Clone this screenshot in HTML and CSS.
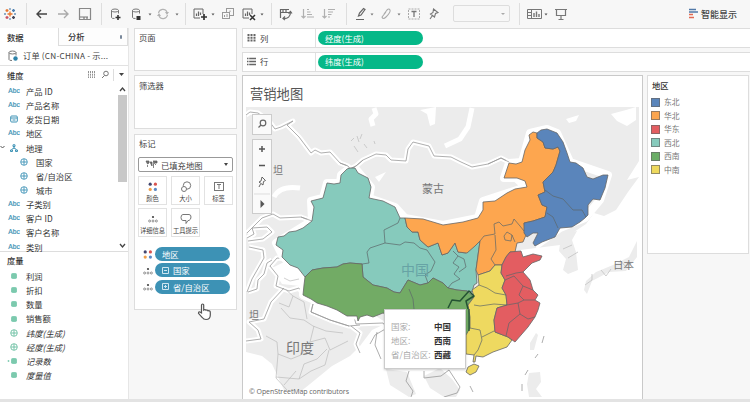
FILE: index.html
```html
<!DOCTYPE html>
<html lang="zh-CN">
<head>
<meta charset="utf-8">
<title>营销地图</title>
<link rel="stylesheet" href="styles.css">
</head>
<body>
<svg width="0" height="0" class="defs">
  <defs>
    <g id="dots4"><circle cx="2.200" cy="2.200" r="1.600" fill="#43466f"/><circle cx="7.400" cy="2.200" r="1.600" fill="#d9534f"/><circle cx="2.200" cy="7.400" r="1.600" fill="#f0a04b"/><circle cx="7.400" cy="7.400" r="1.600" fill="#5b8ac6"/></g>
    <g id="detail"><circle cx="5" cy="2" r="1.100" fill="#444"/><g fill="none" stroke="#777" stroke-width=".8"><circle cx="1.600" cy="6" r="1"/><circle cx="5" cy="6" r="1"/><circle cx="8.400" cy="6" r="1"/></g></g>
    <g id="globe" fill="none" stroke="currentColor"><circle cx="4" cy="4" r="3.300" stroke-width=".9"/><path d="M4 1V7M1 4H7" stroke-width=".9"/></g>
    <g id="hash"><rect x="1" y="1" width="6" height="6" rx="1.800" fill="#8ad2ba"/><path d="M3 1.500V6.500M5 1.500V6.500M1.500 3H6.500M1.500 5H6.500" stroke="#68bd9f" stroke-width=".5"/></g>
    <g id="db"><path d="M0 2V9Q0 10 3 10M7 2V5M0 2Q0 .5 3.500 .5T7 2Q7 3.500 3.500 3.500T0 2" fill="none" stroke="#777"/></g>
    <g id="chart" fill="none" stroke="#666"><path d="M9 5V0H0V9H6"/><path d="M2.500 7V4.500M4.500 7V2.500M6.500 6V3.500" stroke-width="1.200"/></g>
    <g id="frontiers">
      <path d="M246 115L250 112L258 113L269 121L275 129L281 127L293 121L287 125L299 137L311 153L315 150L321 153L330 152L340 163L348 166L350 169L356 166L363 160L376 154L386 155L391 160L406 161L408 149L413 142L429 146L434 156L451 157L461 162L472 167L488 164L501 158L509 162"/>
      <path d="M247 233L262 218L273 214L280 218L301 217L312 221M247 238L254 234L252 228L267 227L272 232L263 239L248 241M249 247L263 250L264 258L252 279L247 292M248 292L257 289L258 280L264 274L267 263L272 260M270 266L277 258L288 259M270 266L278 276L276 286L289 291L299 288L303 294M284 288L271 302L264 319L249 322L258 330L261 339L246 341"/>
      <path d="M313 304L311 312L330 320L349 326L360 325M354 317L356 324L383 323L387 328L375 335L370 344M351 326L360 333L356 344L360 353M377 332L375 345L381 359M409 371L406 381L413 391L411 397M424 371V378L441 376L449 370L460 387L457 393L444 397"/>
    </g>
  </defs>
</svg>
<div class="app">
  <header class="toolbar">
    <svg width="26" height="27" viewBox="0 0 26 27"><g stroke-width="1.300"><path d="M10 11.500V16.500M7.500 14H12.500" stroke="#e8762d"/><path d="M7 9V12M5.500 10.500H8.500" stroke="#e8762d"/><path d="M13.500 9V12M12 10.500H15" stroke="#4c7fb0"/><path d="M7 16V19M5.500 17.500H8.500" stroke="#c95062"/><path d="M13.500 16V19M12 17.500H15" stroke="#445"/><path d="M10 8V10M10 18V20M4 14H6M14 14H16" stroke="#6b93b8"/></g></svg>
    <i class="sep"></i>
    <svg width="74" height="27" viewBox="27 0 74 27" fill="none" stroke-width="1.400"><path d="M47 14H37M41 10L37 14L41 18" stroke="#444"/><path d="M58 14H68M64 10L68 14L64 18" stroke="#aaa"/><path d="M79.500 8.500H90.500V19.500H79.500Z" stroke="#888" stroke-width="1.200"/><path d="M80 17H84V19M87 17V19M84 17H88" stroke="#777" stroke-width="1.200"/></svg>
    <i class="sep"></i>
    <svg width="83" height="27" viewBox="102 0 83 27"><use href="#db" x="111.500" y="8.500"/><path d="M118 15V20M115.500 17.500H120.500" stroke="#333" stroke-width="1.600"/><use href="#db" x="132.500" y="8.500"/><rect x="136.500" y="16" width="4" height="4" fill="#333"/><path d="M148.500 13.500h3l-1.500 2zM175.500 13.500h3l-1.500 2z" fill="#666"/><g fill="none" stroke="#b3b3b3" stroke-width="1.200"><path d="M158.500 13A4.500 4.500 0 0 1 167 12M167.500 15A4.500 4.500 0 0 1 159 16"/></g><path d="M165 12h4l-2 3zM157 16h4l-2-3z" fill="#b3b3b3"/></svg>
    <i class="sep"></i>
    <svg width="85" height="27" viewBox="186 0 85 27"><use href="#chart" x="194" y="9"/><path d="M204 14V20M201 17H207" stroke="#333" stroke-width="1.700"/><path d="M211.500 13.500h3l-1.500 2zM260.500 13.500h3l-1.500 2z" fill="#555"/><g fill="#f7f7f7" stroke="#999"><rect x="226.500" y="8.500" width="7" height="7"/><rect x="222.500" y="12.500" width="7" height="6"/></g><path d="M224.500 17V15M227 17V14M230 12V10.500" stroke="#999"/><use href="#chart" x="243" y="9"/><path d="M250 15L255 20M255 15L250 20" stroke="#333" stroke-width="1.500"/></svg>
    <i class="sep"></i>
    <svg width="74" height="27" viewBox="272 0 74 27" fill="none"><g stroke="#666" stroke-width="1.200"><path d="M280 9.500H289M280 12.500H289M280.500 9V18M283 9V13M286 9V12M283 18.500Q290.500 19 290.500 12M288.500 13.500L290.500 11.500L292 13.500M285 16.500L283 18.500L285 20"/></g><g stroke="#b0b0b0" stroke-width="1.200"><path d="M303.500 9V18M301.500 16L303.500 18L305.500 16M307 9.500H309M307 12H310.500M307 14.500H312M307 17H314M324.500 9V18M322.500 16L324.500 18L326.500 16M328 9.500H335M328 12H333M328 14.500H331.500M328 17H330"/></g></svg>
    <i class="sep"></i>
    <svg width="103" height="27" viewBox="347 0 103 27" fill="none"><path d="M358.500 16L359.500 13L363.500 8.500L365 9.500L361 15ZM356 19.500H364" stroke="#666" stroke-width="1.200"/><path d="M370.500 13.500h3l-1.500 2zM397.500 13.500h3l-1.500 2z" fill="#777"/><path d="M384 14L387 10Q389 8 390 10T386 17Q383 20 382 17L386 12" stroke="#aaa" stroke-width="1.100"/><rect x="408.500" y="9" width="11" height="10" stroke="#aaa" stroke-dasharray="2 1"/><path d="M411.500 11.500H416.500M414 11.500V17" stroke="#777" stroke-width="1.300"/><path d="M433.500 9L438 12.500L435.500 13.500L434.500 17L430.500 14L433 12.500ZM432.500 15.500L430 19" stroke="#777" stroke-width="1.100"/></svg>
    <div class="fit"><i></i></div>
    <i class="sep sep-fit"></i>
    <svg width="60" height="27" viewBox="521 0 60 27" fill="none" stroke="#777"><path d="M528.500 9.500H542.500V18.500H528.500ZM532.500 9V19M529 12.500H532M529 15.500H532"/><path d="M535 17V13M537.500 17V11.500M540 17V14" stroke-width="1.400"/><path d="M545.500 13.500h3l-1.500 2z" fill="#555" stroke="none"/><path d="M556 9.500H568M557.500 10V15.500H566.500V10M562 16V19M559.500 19.500H564.500" stroke-width="1.200"/></svg>
    <div class="smart"><svg width="10" height="12"><path d="M1 1.500H8M1 4H10" stroke="#5179a8" stroke-width="1.600"/><path d="M1 6.500H5M1 9.500H6" stroke="#e26a52" stroke-width="1.500"/></svg><span>智能显示</span></div>
  </header>

  <main class="work">
    <aside class="data">
      <div class="tabs"><b>数据</b><div class="tab"><b>分析</b><i></i></div></div>
      <div class="source"><svg width="12" height="12"><use href="#db" x="1" y=".5"/><circle cx="7.500" cy="8.500" r="2.200" fill="#2d82a8"/></svg><span>订单 (CN-CHINA - 示...</span></div>
      <div class="dims">
        <div class="head"><b>维度</b><svg width="40" height="12" fill="none" stroke="#777"><path d="M3.500 2V9M5.500 2V9M7.500 2V9M9.500 2V9" stroke-width=".8" stroke-dasharray="2 .7"/><circle cx="21" cy="4.500" r="2.300"/><path d="M19.500 6.500L17 9"/><path d="M28.500 0V12" stroke="#ddd"/><path d="M34 4h5l-2.500 3z" fill="#444" stroke="none"/></svg></div>
        <div class="dimbody">
          <ul class="fields">
            <li><em>Abc</em>产品 ID</li>
            <li><em>Abc</em>产品名称</li>
            <li><em><svg width="8" height="8" fill="none" stroke="#3d92b5"><rect x=".7" y="1" width="6.600" height="6" rx="1"/><path d="M1 3H7M2.500 5H5.500"/></svg></em>发货日期</li>
            <li><em>Abc</em>地区</li>
            <li class="parent"><svg width="5" height="5" class="chev"><path d="M.5 1L2.500 3L4.500 1" fill="none" stroke="#555"/></svg><em><svg width="8" height="8" fill="none" stroke="#3d92b5"><path d="M3 .8H5V2.500H3ZM4 3V4.500M1.500 5.500L4 4L6.500 5.500M.5 6H2.500V7.500H.5ZM5.500 6H7.500V7.500H5.500Z"/></svg></em>地理</li>
            <li class="sub"><em><svg width="8" height="8"><use href="#globe"/></svg></em>国家</li>
            <li class="sub"><em><svg width="8" height="8"><use href="#globe"/></svg></em>省/自治区</li>
            <li class="sub"><em><svg width="8" height="8"><use href="#globe"/></svg></em>城市</li>
            <li><em>Abc</em>子类别</li>
            <li><em>Abc</em>客户 ID</li>
            <li><em>Abc</em>客户名称</li>
            <li><em>Abc</em>类别</li>
          </ul>
          <div class="scroll"><svg width="9" height="11"><path d="M2 7L4.500 4L7 7" fill="none" stroke="#444" stroke-width="1.300"/></svg><i></i><svg width="9" height="11"><path d="M2 4L4.500 7L7 4" fill="none" stroke="#444" stroke-width="1.300"/></svg></div>
        </div>
      </div>
      <div class="measures">
        <div class="head"><b>度量</b></div>
        <ul class="fields green">
          <li><em><svg width="8" height="8"><use href="#hash"/></svg></em>利润</li>
          <li><em><svg width="8" height="8"><use href="#hash"/></svg></em>折扣</li>
          <li><em><svg width="8" height="8"><use href="#hash"/></svg></em>数量</li>
          <li><em><svg width="8" height="8"><use href="#hash"/></svg></em>销售额</li>
          <li class="it"><em><svg width="8" height="8"><use href="#globe"/></svg></em>纬度(生成)</li>
          <li class="it"><em><svg width="8" height="8"><use href="#globe"/></svg></em>经度(生成)</li>
          <li class="it"><em><svg width="14" height="8"><circle cx="1.500" cy="4" r=".9" fill="#7fccb2"/><use href="#hash" x="3"/></svg></em>记录数</li>
          <li class="it"><em><svg width="8" height="8"><use href="#hash"/></svg></em>度量值</li>
        </ul>
      </div>
    </aside>

    <section class="cards">
      <div class="card pages">页面</div>
      <div class="card filters">筛选器</div>
      <div class="card marks">
        <div>标记</div>
        <div class="type"><svg width="13" height="9"><path d="M1 1H4V3L2.500 4ZM5 2H7V6L6 4ZM8 1H12V3H10L8.500 4V8M2.500 5V7M10.500 4V5" fill="#777" stroke="#555" stroke-width=".7"/></svg><span>已填充地图</span><i></i></div>
        <div class="buttons">
          <div><svg width="12" height="12"><use href="#dots4" x="1" y="1"/></svg>颜色</div>
          <div><svg width="12" height="12" fill="none" stroke="#777"><circle cx="7" cy="4.500" r="3.700"/><circle cx="4" cy="8" r="2.500" fill="#fff"/></svg>大小</div>
          <div><svg width="12" height="12" fill="none" stroke="#777"><rect x="1.500" y="1.500" width="9" height="8"/><path d="M4 3.500H8M6 3.500V8"/></svg>标签</div>
          <div><svg width="12" height="12"><use href="#detail" x="1" y="2"/></svg>详细信息</div>
          <div><svg width="12" height="12" fill="none" stroke="#777"><path d="M3 1.500H9Q11 1.500 11 4T9 7.500H8L6 10.500V7.500H3Q1 7.500 1 4.500T3 1.500Z"/></svg>工具提示</div>
        </div>
        <div class="pills">
          <div><svg width="12" height="11"><use href="#dots4" x="1" y=".7"/></svg><span>地区</span></div>
          <div><svg width="12" height="11"><use href="#detail" x="1" y="2"/></svg><span><svg width="7" height="7" fill="none" stroke="#cfe6f0"><path d="M.5 .5H6.500V6.500H.5ZM2 3.500H5"/></svg>国家</span></div>
          <div><svg width="12" height="11"><use href="#detail" x="1" y="2"/></svg><span><svg width="7" height="7" fill="none" stroke="#cfe6f0"><path d="M.5 .5H6.500V6.500H.5ZM2 3.500H5M3.500 2V5"/></svg>省/自治区</span></div>
        </div>
        <svg class="cursor" width="15" height="18" viewBox="0 0 15 18"><path d="M4.500 10V2.200Q4.500 1 5.600 1T6.700 2.200V7Q8 6 9 7.200Q10.200 6.600 11 7.800Q13.300 7.300 13.300 9.500V12Q13.300 16.500 9 16.500Q6.500 16.500 5.300 14.500L1.500 10.300Q1.500 8.500 3 9Z" fill="#fff" stroke="#555" stroke-width="1.200"/></svg>
      </div>
    </section>

    <section class="view">
      <div class="shelf"><div><svg width="9" height="9"><path d="M1.500 0V8M4.500 0V8M7.500 0V8" stroke="#666" stroke-width="2" stroke-dasharray="2 .7"/></svg>列</div><span>经度(生成)</span></div>
      <div class="shelf"><div><svg width="9" height="9"><path d="M0 1.500H9M0 4.500H9M0 7.500H9" stroke="#666" stroke-width="1.500" stroke-dasharray="1.500 .7 7"/></svg>行</div><span>纬度(生成)</span></div>
      <div class="lower">
        <div class="viz">
          <h1>营销地图</h1>
          <svg class="map" width="393" height="290" viewBox="246 107 393 290">
            <rect x="246" y="107" width="393" height="290" fill="#fff"/>
            <path class="land" d="M246 107H639V177L628 192L616 210L604 216L594 213L586 224L574 232L560 245L520 250L470 300L440 320L385 324L372 330L360 346L350 356L332 366L310 384L300 392L284 390L272 364L262 356L246 352Z"/>
            <use href="#frontiers" class="halo"/>
            <path class="halo" d="M274 197Q280 185 300 188M374 108L376 114L371 119L373 126M445 146L460 139L468 127L472 108"/>
            <g fill="#fff"><path d="M566 119L579 115L576 121L569 123ZM611 114L626 110L636 107V120L627 126L617 121ZM420 110L436 107L435 124L430 126L427 114ZM375 177L386 172L379 182ZM627 180L639 161V177ZM305 258L284 262L272 268L282 284L300 286L310 280ZM311 303L312 313L335 322L360 326L385 322L370 312Z"/></g>
            <path class="land" d="M561 238L570 232L577 231L572 240L576 252L578 270L568 274L563 270L566 259L559 251ZM584 290L586 281L596 272L613 265L629 257L637 241V257L626 271L609 272L592 281L587 294ZM530 343L536 333L538 335L534 350L530 350ZM529 373L540 372L541 382L536 389L542 397H529L527 384ZM386 369L407 372L416 394L409 397L390 385ZM424 376L440 368L452 379L460 390L456 397H444L430 388Z"/>
            <use href="#frontiers" class="border"/>
            <g class="border">
              <path class="faint" d="M285 289L293 296L289 307L279 303M293 296L304 302L307 319M281 308L290 318L304 320L313 326L326 331L343 333M266 336L277 342L278 354L291 359L301 355L310 342L325 338L330 350L348 341M278 354L276 378L287 390M276 377L299 379L304 364M299 379L311 371L325 365L329 350M304 364L317 359L327 349M284 385L296 371M314 326L310 342M563 249L572 245M568 258L578 252M585 285L592 280L592 274M601 270L606 276L611 269M620 260L625 266L631 263M357 136L359 142M362 134L360 139M354 146L358 152M364 144L367 148M351 141L354 138M374 141L375 144M284 278L290 281L299 279"/>
              <path d="M542 343L544 336M535 358L538 354M525 375L528 370M522 391V384M470 386L473 392"/>
            </g>
            <g fill="none" stroke="#fff" stroke-width="8" stroke-linejoin="round">
              <path d="M350 168L341 175L340 183L327 183L323 198L311 201L312 221L276 243L283 257L305 277L303 295L337 310L360 317M355 168L371 187L369 198L395 207L405 218L443 225L478 218L483 201L526 187L516 178L504 178L509 163L522 162L530 133L547 129L557 133L570 162L608 175L600 200L585 218L560 228L535 246"/>
            </g>
            <path class="border" d="M488 164L501 158L509 162M340 163L348 166L350 169L356 166L363 160M301 217L312 221M313 304L311 312L330 320L349 326"/>
            <g class="region">
              <path class="teal" d="M350 168L347 169L341 175L340 183L334 184L327 183L323 198L311 201L314 207L312 221L303 228L296 231L289 232L284 236L278 237L276 245L283 250L282 257L290 265L298 268L305 277L312 270L323 268L337 267L343 264L350 263L362 264L363 277L373 285L387 288L394 292L400 293L408 280L420 285L428 283L433 278L443 283L448 288L457 290L467 291L472 292L474 285L477 283L476 270L480 241L466 253L458 252L455 243L448 253L442 255L438 243L428 247L420 240L418 232L412 232L407 227L405 218L400 218L395 207L383 201L369 198L371 187L368 178L358 173L355 168Z"/>
              <path class="green" d="M305 277L312 270L323 268L337 267L343 264L350 263L362 264L363 277L373 285L387 288L394 292L400 293L408 280L420 285L428 283L433 278L443 283L448 288L457 290L467 291L474 297L468 305L470 317V331L466 340L456 352L440 358L425 340L410 330L393 317L383 313L373 317L367 315L360 317L358 321L357 316L347 316L337 310L327 306L317 303L311 299L303 295L304 285Z"/>
              <path class="orange" d="M405 218L423 219L443 225L463 222L478 218L483 210V202L495 201L507 193L515 189L527 187L525 181L517 178L504 178L509 163L516 164L522 162L525 150L530 140L529 135L533 132L537 133L537 138L543 142L545 148L553 149L558 147L560 151L556 165L553 172L543 182L545 192L538 195L542 205L547 207L545 217L533 221L524 223L526 235L523 242L517 243L515 252L510 252L506 257L502 265L495 265L490 271L478 275L476 270L480 241L475 246L467 253L458 252L455 243L448 253L442 255L438 243L428 247L420 240L418 232L412 232L407 227Z"/>
              <path class="blue" d="M537 133L541 130L547 129L557 133L563 142L567 153L570 162L576 163L583 168L587 177L593 179L603 175L608 175L605 188L600 200L593 199L588 205V215L585 218L580 222L572 227L560 228L555 237L542 242L535 246L533 243L538 233L533 233L527 237L524 233V223L533 221L545 217L547 207L542 205L538 195L545 192L543 182L553 172L556 165L560 151L558 147L553 149L545 148L543 142L537 138Z"/>
              <path class="yellow" d="M478 275L490 271L495 265L502 265L501 273L505 280L502 288L506 295L507 305L497 308L494 320L495 332L508 337L512 340L507 347L493 352L483 357L476 356L475 362H473L474 355L466 354L466 335L470 328V317L468 305L474 297L472 290L479 285Z"/>
              <path class="yellow" d="M468 367L474 364L479 366L476 372L470 375L466 372Z"/>
              <path class="red" d="M502 265L506 257L510 252L521 251L523 257L533 254L542 256L540 260L532 263L523 272L530 280L533 290L538 295L535 300L540 303L538 310L535 317L528 327L515 342L508 337L495 332L494 320L497 308L507 305L506 295L502 288L505 280L501 273Z"/>
            </g>
            <g class="inner">
              <path d="M400 218L398 223L384 230L385 243L370 248L367 252L369 263L362 264M385 243L400 245L405 242L414 243L420 248L427 250L435 262L431 271L425 275L428 283M453 251L458 256L453 263L459 267L454 274L460 279L452 283L448 288M458 256L464 259L466 267L459 272"/>
              <path d="M480 241L484 236L495 234L494 224L499 222L503 226L512 224L514 219L520 226L524 231M495 235L496 250L491 259L495 265M504 236L507 232L512 235L511 241L505 240L504 236M512 235L515 242"/>
              <path d="M545 190L553 196L563 199L573 210L582 210L586 217M547 213L553 217L558 228"/>
              <path d="M479 285L487 288L495 293L506 295M474 305L480 306L494 304L507 305M470 328L480 330L482 340L478 350L474 355M482 337L494 331M506 276L516 273L523 272M505 280L514 276L523 286L533 290M523 286L519 295L524 300L518 303L507 305M524 300L535 300M518 303L520 314L509 323L506 336M520 314L528 319L535 317M409 289L413 299L414 309"/>
              <path d="M448 308L452 300L460 301L469 291L474 296L466 301L468 309" stroke="#245333" stroke-width="1.500"/>
              <path d="M469 309V331" stroke="#245333" stroke-width="1.300"/>
            </g>
            <g class="place">
              <text x="422" y="193" font-size="11">蒙古</text>
              <text x="613" y="269" font-size="10.500">日本</text>
              <text x="286" y="353" font-size="14">印度</text>
              <text x="401" y="275" font-size="14" class="cn">中国</text>
              <text x="273" y="174" font-size="10">坦</text>
              <text x="249" y="319" font-size="10">坦</text>
            </g>
            <text x="249" y="394" class="credit" textLength="100">© OpenStreetMap contributors</text>
          </svg>
          <div class="mapsearch"><svg width="18" height="19" fill="none" stroke="#666" stroke-width="1.200"><circle cx="10" cy="8" r="2.800"/><path d="M8 10L5.500 12.500"/></svg></div>
          <div class="mapzoom"><svg width="18" height="73" fill="none" stroke="#555" stroke-width="1.500"><path d="M6 9H12M9 6V12M6 25.500H12"/><path d="M9 37L12.500 40.500L10.500 41.500L10 45L6 42L8 41ZM7.500 44L6 47" stroke-width=".9"/><path d="M1 54H17" stroke="#ddd" stroke-width="1"/><path d="M7.500 60L11.500 64L7.500 68Z" fill="#555" stroke="none"/></svg></div>
          <dl class="tip"><dt>国家:</dt><dd>中国</dd><dt>地区:</dt><dd>西南</dd><dt>省/自治区:</dt><dd>西藏</dd></dl>
        </div>
        <div class="legend">
          <b>地区</b>
          <ul><li><i class="c-blue"></i>东北</li><li><i class="c-orange"></i>华北</li><li><i class="c-red"></i>华东</li><li><i class="c-teal"></i>西北</li><li><i class="c-green"></i>西南</li><li><i class="c-yellow"></i>中南</li></ul>
        </div>
      </div>
    </section>
  </main>
</div>
</body>
</html>
```
FILE: styles.css
```css
* { box-sizing: border-box; }
body { margin: 0; font: 8.3px/1 "Noto Sans CJK SC", sans-serif; color: #444; background: #f7f7f7; }
ul, dl, dd { margin: 0; padding: 0; list-style: none; }
svg { display: block; flex: none; }
b { font-weight: 500; color: #333; }
.defs { position: absolute; }
.app { width: 750px; height: 402px; display: flex; flex-direction: column; overflow: hidden; border-bottom: 3px solid #e3e3e3; }

.toolbar { height: 28px; flex: none; display: flex; align-items: flex-start; background: #f7f7f7; }
.sep { width: 1px; height: 22px; margin-top: 3px; background: #dedede; }
.fit { width: 57px; height: 17px; margin: 5px 0 0 3px; border: 1px solid #ddd; border-radius: 2px; display: flex; align-items: center; justify-content: flex-end; padding-right: 4px; }
.fit i { border: 2px solid transparent; border-top-color: #aaa; border-bottom: 0; }
.sep-fit { margin-left: 9px; }
.smart { margin: 8px 13px 0 auto; display: flex; gap: 3px; align-items: center; font-size: 9px; font-weight: 500; color: #444; }

.work { flex: 1; display: flex; min-height: 0; }
.data { width: 129px; background: #fff; border-right: 1px solid #e6e6e6; display: flex; flex-direction: column; }
.tabs { display: flex; height: 18px; padding-left: 7px; justify-content: space-between; align-items: center; }
.tab { width: 70px; height: 18px; border: 1px solid #ddd; border-top: 0; display: flex; justify-content: space-between; align-items: center; padding: 0 5px 0 9px; background: #fdfdfd; }
.tab i { width: 2.5px; height: 4px; border-radius: 1px; background: #78879a; }
.source { height: 20px; display: flex; align-items: center; gap: 3px; padding-left: 8px; border-bottom: 1px solid #e2e2e2; white-space: nowrap; font-size: 8.2px; letter-spacing: .22px; }
.dims { height: 186px; border-bottom: 1px solid #ddd; }
.head { height: 18px; display: flex; align-items: center; justify-content: space-between; padding: 0 3px 0 7px; }
.dimbody { display: flex; justify-content: space-between; }
.fields { flex: 1; }
.fields li { height: 14.17px; display: flex; align-items: center; padding-left: 7px; color: #333; }
.fields em { width: 14px; margin-right: 5px; display: flex; justify-content: center; font: 6.6px/1 "Liberation Sans", sans-serif; color: #3d92b5; -webkit-text-stroke: .2px #3d92b5; }
.fields li.sub { padding-left: 17px; }
.fields li.parent { padding-left: 0; }
.chev { margin-right: 2px; }
.scroll { width: 9px; height: 167px; margin-right: 1px; display: flex; flex-direction: column; }
.scroll i { height: 87px; background: #c8c8c8; margin-bottom: auto; }
.measures .head { height: 17px; }
.fields.green em { color: #68bd9f; }
.fields .it { font-style: italic; }

.cards { width: 108px; padding-left: 5px; display: flex; flex-direction: column; }
.card { background: #fff; border: 1px solid #ddd; padding: 5px 4px; }
.pages { height: 43px; padding-top: 4px; }
.filters { height: 54px; margin: 4px 0 5px; }
.marks { height: 176px; position: relative; padding: 4px 3px; }
.marks > div:first-child { padding-left: 1px; }
.type { height: 15px; margin-top: 10px; border: 1px solid #999; border-radius: 2px; display: flex; align-items: center; gap: 3px; padding: 0 4px 0 6px; }
.type i { margin-left: auto; border: 2.5px solid transparent; border-top: 3px solid #444; border-bottom: 0; }
.buttons { display: grid; grid-template-columns: repeat(3, 29px); grid-auto-rows: 29px; gap: 3px 4px; margin-top: 4px; }
.buttons div { border: 1px solid #e2e2e2; display: flex; flex-direction: column; align-items: center; justify-content: space-between; padding: 4px 0 2px; font-size: 6.3px; white-space: nowrap; }
.pills { margin-top: 10px; display: flex; flex-direction: column; gap: 2.2px; }
.pills div { display: flex; align-items: center; gap: 1px; padding-left: 4px; }
.pills span { width: 75px; height: 14px; border-radius: 7px; background: #3d92b5; color: #fff; display: flex; align-items: center; gap: 4px; padding-left: 7px; }
.cursor { position: absolute; left: 62px; top: 168px; }

.view { flex: 1; padding-left: 5px; display: flex; flex-direction: column; }
.shelf { height: 20px; margin-bottom: 3.5px; background: #fff; border: 1px solid #ddd; border-right: 0; display: flex; align-items: center; }
.shelf div { width: 73px; height: 18px; padding-left: 4px; display: flex; align-items: center; gap: 4px; border-right: 1px solid #e0e0e0; }
.shelf span { margin-left: 2px; width: 105px; height: 14px; border-radius: 7px; background: #05b888; color: #fff; display: flex; align-items: center; padding-left: 7px; }
.lower { flex: 1; display: flex; min-height: 0; }
.viz { width: 401px; background: #fff; border: 1px solid #c9c9c9; border-bottom: 0; padding: 0 3px; position: relative; }
h1 { margin: 0; height: 31px; padding: 11px 0 0 4px; font-size: 13.3px; line-height: 13px; font-weight: 400; color: #555; }
.legend { flex: 1; height: 179px; margin: 0 1px 0 4px; background: #fff; border: 1px solid #ddd; padding: 5px 3px; }
.legend b { display: block; padding-left: 1px; }
.legend ul { margin-top: 6px; }
.legend li { height: 13.5px; display: flex; align-items: center; gap: 4px; font-size: 7.8px; color: #777; }
.legend i { width: 9px; height: 9px; border: 1px solid #666a; }
.c-blue { background: #5a85bb; } .c-orange { background: #fba54f; } .c-red { background: #e35d61; }
.c-teal { background: #86cabc; } .c-green { background: #6aad66; } .c-yellow { background: #eed95d; }

.land { fill: #ececec; }
.halo { fill: none; stroke: #fff; stroke-width: 5; stroke-linejoin: round; }
.border { fill: none; stroke: #999; stroke-width: .8; stroke-linejoin: round; }
.faint { stroke: #bbb; stroke-width: .7; }
.region { stroke: #666; stroke-width: .8; stroke-linejoin: round; }
.teal { fill: #86cabc; } .green { fill: #72ab65; } .orange { fill: #fda64f; }
.blue { fill: #5a85bb; } .yellow { fill: #eed960; } .red { fill: #e35d61; }
.inner { fill: none; stroke: #5c6668; stroke-width: .7; stroke-linejoin: round; }
.place { fill: #777; }
.cn { fill: #67a3a5; }
.credit { font-size: 7px; font-family: "Open Sans", sans-serif; fill: #666; }
.mapsearch, .mapzoom { position: absolute; left: 9px; top: 38px; width: 20px; border: 1px solid #ccc; background: #fafafa; }
.mapzoom { top: 63px; }
.tip { position: absolute; left: 141px; top: 233px; width: 82px; height: 60px; padding: 9px 6px; background: #fff; border: 1px solid #ccc; box-shadow: 0 1px 2px #0003; display: grid; grid-template-columns: 43px 1fr; grid-auto-rows: 14px; align-items: center; font-size: 8.5px; white-space: nowrap; }
dt { color: #aaa; }
dd { font-weight: 700; color: #333; }
```
